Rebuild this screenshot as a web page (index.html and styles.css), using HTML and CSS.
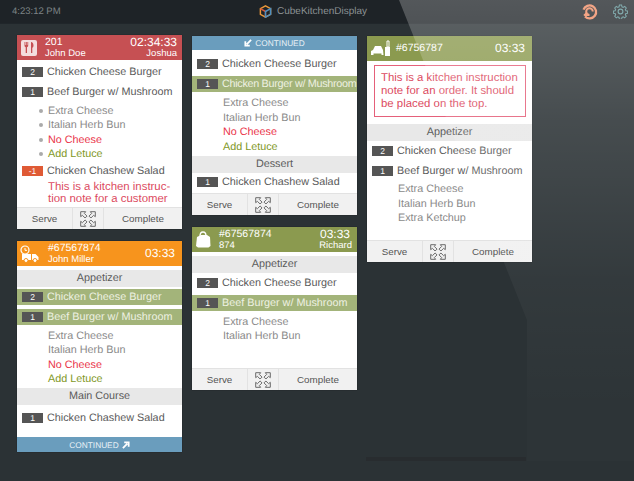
FILE: index.html
```html
<!DOCTYPE html>
<html lang="en">
<head>
  <meta charset="UTF-8" />
  <title>CubeKitchenDisplay</title>
  <link rel="stylesheet" href="styles.css">
</head>
<body>

<svg class="defs" width="0" height="0">
  <symbol id="expand" viewBox="0 0 16 16">
    <g fill="none" stroke="#6a6a6a" stroke-width="1">
      <path d="M.7 .7h5L4.300 2.400 7 5.100 5.100 7 2.400 4.300 .7 5.700z"/>
      <path d="M15.300 .7h-5l1.400 1.700L9 5.100 10.900 7l2.700-2.700 1.700 1.400z"/>
      <path d="M.7 15.300h5l-1.400-1.700L7 10.900 5.100 9l-2.700 2.700-1.700-1.400z"/>
      <path d="M15.300 15.300h-5l1.400-1.700L9 10.900 10.900 9l2.700 2.700 1.700-1.400z"/>
    </g>
  </symbol>
</svg>

<header class="topbar">
  <span class="clock">4:23:12 PM</span>
  <div class="brand">
    <svg width="13" height="13" viewBox="0 0 14 14">
      <path d="M7 1l5.500 3v6L7 13 1.500 10V4z" fill="none" stroke="#e8973a" stroke-width="1.600"/>
      <path d="M1.500 4L7 7v6" fill="none" stroke="#d9593a" stroke-width="1.600"/>
      <path d="M12.500 4L7 7v6l5.500-3z" fill="none" stroke="#4d8fc0" stroke-width="1.600"/>
    </svg>
    CubeKitchenDisplay
  </div>
  <div class="tools">
    <svg width="17" height="17" viewBox="0 0 17 17">
      <path d="M4 13.500a6.500 6.500 0 1 0 -1.500-6.800" fill="none" stroke="#ef8a62" stroke-width="2.300"/>
      <path d="M11.800 8.500a3.300 3.300 0 1 0-3.300 3.400H3.500" fill="none" stroke="#ef8a62" stroke-width="2"/>
      <path d="M5.500 8.800l-3.200 3.100 3.200 2.300z" fill="#ef8a62"/>
    </svg>
    <svg width="15" height="15" viewBox="0 0 24 24">
      <circle cx="12" cy="12" r="3.800" fill="none" stroke="#5d9396" stroke-width="1.800"/>
      <path d="M10 1.500h4l.6 3 2.300 1 2.600-1.700 2.800 2.800-1.700 2.600 1 2.300 3 .6v3.800l-3 .6-1 2.300 1.700 2.600-2.800 2.800-2.600-1.700-2.300 1-.6 3h-4l-.6-3-2.300-1-2.600 1.700-2.800-2.800 1.700-2.600-1-2.300-3-.6v-3.800l3-.6 1-2.300L1.700 6.600l2.800-2.800 2.600 1.700 2.300-1z" transform="translate(1.200 .4) scale(.9)" fill="none" stroke="#5d9396" stroke-width="1.800"/>
    </svg>
  </div>
</header>

<main class="board">
  <div class="col">
    <section class="card card-a">
      <div class="card-head red">
        <span class="plate">
          <svg width="12" height="13" viewBox="0 0 12 13">
            <path d="M1.500 1v3.500c0 1 .7 1.500 1.200 1.700V12h1.300V6.200c.5-.2 1.200-.7 1.200-1.700V1h-.8v3H3.800V1h-.9v3H2.300V1zM8 1c1.500 0 2.500 1.500 2.500 3.500 0 1.300-.5 2-1.200 2.300V12H8z" fill="#c65053"/>
          </svg>
        </span>
        <div class="who"><b>201</b><span>John Doe</span></div>
        <div class="when"><b>02:34:33</b><span>Joshua</span></div>
      </div>
      <div class="card-body">
        <div class="item"><span class="qty">2</span>Chicken Cheese Burger</div>
        <div class="item"><span class="qty">1</span>Beef Burger w/ Mushroom</div>
        <ul class="mods dotted">
          <li>Extra Cheese</li>
          <li>Italian Herb Bun</li>
          <li class="no">No Cheese</li>
          <li class="add">Add Letuce</li>
        </ul>
        <div class="item"><span class="qty minus">-1</span>Chicken Chashew Salad</div>
        <p class="cust-note">This is a kitchen instruc-<br>tion note for a customer</p>
      </div>
      <div class="card-foot">
        <button>Serve</button>
        <button class="zoom"><svg width="16" height="16"><use href="#expand"/></svg></button>
        <button>Complete</button>
      </div>
    </section>

    <section class="card card-b">
      <div class="card-head orange">
        <svg class="kind" width="20" height="18" viewBox="0 0 20 18">
          <circle cx="5" cy="5" r="4" fill="none" stroke="#fff" stroke-width="1.200"/>
          <path d="M5 3v2.300h2" fill="none" stroke="#fff"/>
          <path d="M2 9h9v6H2zM12 9h3.500l3 3v3H12z" fill="#fff"/>
          <circle cx="6" cy="15.500" r="2" fill="#fff" stroke="#f7941d"/>
          <circle cx="15" cy="15.500" r="2" fill="#fff" stroke="#f7941d"/>
        </svg>
        <div class="who"><b>#67567874</b><span>John Miller</span></div>
        <div class="when solo"><b>03:33</b></div>
      </div>
      <div class="card-body">
        <div class="course">Appetizer</div>
        <div class="item on"><span class="qty">2</span>Chicken Cheese Burger</div>
        <div class="item on"><span class="qty">1</span>Beef Burger w/ Mushroom</div>
        <ul class="mods">
          <li>Extra Cheese</li>
          <li>Italian Herb Bun</li>
          <li class="no">No Cheese</li>
          <li class="add">Add Letuce</li>
        </ul>
        <div class="course">Main Course</div>
        <div class="item"><span class="qty">1</span>Chicken Chashew Salad</div>
      </div>
      <div class="cont-foot">CONTINUED <svg width="8" height="8" viewBox="0 0 9 9"><path d="M1 8l5-5M2.500 1.500h5v5" fill="none" stroke="#fff" stroke-width="2"/></svg></div>
    </section>
  </div>

  <div class="col">
    <section class="card card-c">
      <div class="cont-head"><svg width="8" height="8" viewBox="0 0 9 9"><path d="M8 1L3 6M1.500 2.500v5h5" fill="none" stroke="#fff" stroke-width="2"/></svg> CONTINUED</div>
      <div class="card-body">
        <div class="item"><span class="qty">2</span>Chicken Cheese Burger</div>
        <div class="item on tight"><span class="qty">1</span>Chicken Burger w/ Mushroom</div>
        <ul class="mods">
          <li>Extra Cheese</li>
          <li>Italian Herb Bun</li>
          <li class="no">No Cheese</li>
          <li class="add">Add Letuce</li>
        </ul>
        <div class="course">Dessert</div>
        <div class="item"><span class="qty">1</span>Chicken Chashew Salad</div>
      </div>
      <div class="card-foot">
        <button>Serve</button>
        <button class="zoom"><svg width="16" height="16"><use href="#expand"/></svg></button>
        <button>Complete</button>
      </div>
    </section>

    <section class="card card-d">
      <div class="card-head olive">
        <svg class="kind" width="16" height="17" viewBox="0 0 16 17">
          <path d="M5 5c0-3 1-4 3-4s3 1 3 4" fill="none" stroke="#fff" stroke-width="1.300"/>
          <path d="M2 6l4-2h6l3 2 .5 9-2 1.500H3L1 15z" fill="#fff"/>
        </svg>
        <div class="who"><b>#67567874</b><span>874</span></div>
        <div class="when"><b>03:33</b><span>Richard</span></div>
      </div>
      <div class="card-body">
        <div class="course">Appetizer</div>
        <div class="item"><span class="qty">2</span>Chicken Cheese Burger</div>
        <div class="item on"><span class="qty">1</span>Beef Burger w/ Mushroom</div>
        <ul class="mods">
          <li>Extra Cheese</li>
          <li>Italian Herb Bun</li>
        </ul>
      </div>
      <div class="card-foot">
        <button>Serve</button>
        <button class="zoom"><svg width="16" height="16"><use href="#expand"/></svg></button>
        <button>Complete</button>
      </div>
    </section>
  </div>

  <div class="col">
    <section class="card card-e">
      <div class="card-head olive">
        <svg class="kind car" width="21" height="17" viewBox="0 0 21 17">
          <path d="M1 15v-4l2-1 2-4h6l2 4 .5 5h-2v-1.500H3.500V15z" fill="#fff"/>
          <path d="M15 7h5v9h-5z" fill="#fff"/>
          <path d="M17 1h2v6h-2z" fill="none" stroke="#fff"/>
        </svg>
        <div class="who one"><b>#6756787</b></div>
        <div class="when solo"><b>03:33</b></div>
      </div>
      <div class="card-body">
        <p class="order-note">This is a kitchen instruction note for an order. It should be placed on the top.</p>
        <div class="course">Appetizer</div>
        <div class="item"><span class="qty">2</span>Chicken Cheese Burger</div>
        <div class="item"><span class="qty">1</span>Beef Burger w/ Mushroom</div>
        <ul class="mods">
          <li>Extra Cheese</li>
          <li>Italian Herb Bun</li>
          <li>Extra Ketchup</li>
        </ul>
      </div>
      <div class="card-foot">
        <button>Serve</button>
        <button class="zoom"><svg width="16" height="16"><use href="#expand"/></svg></button>
        <button>Complete</button>
      </div>
    </section>
  </div>
</main>

<div class="pager"></div>
<div class="glare"></div>

</body>
</html>
```

FILE: styles.css
```css
body {
  font-family: "Liberation Sans", Arial, sans-serif;
  text-rendering: geometricPrecision;
  margin: 0;
  width: 634px;
  height: 481px;
  overflow: hidden;
  background: #2b3235;
  position: relative;
}
.defs { position: absolute; }

.topbar {
  height: 23px;
  background: #1e2327;
  border-bottom: 1px solid #20262a;
  display: flex;
  align-items: center;
  justify-content: space-between;
  padding: 0 6px 0 12px;
  position: relative;
}
.clock { font-size: 9.500px; color: #7d8386; }
.brand {
  position: absolute;
  left: 259px;
  top: 5px;
  font-size: 10px;
  color: #8b9194;
  display: flex;
  align-items: center;
  gap: 5px;
}
.tools { display: flex; align-items: center; gap: 15px; }

.board {
  display: flex;
  gap: 10px;
  padding: 11px 0 0 17px;
}
.col { width: 165px; display: flex; flex-direction: column; gap: 12px; }

.card {
  background: white;
  display: flex;
  flex-direction: column;
  color: #5a5a5a;
  box-shadow: 0 0 1px rgba(0,0,0,0.5);
}
.card-a { height: 194px; }
.card-b { height: 211px; }
.card-c { height: 179px; margin-top: 1px; }
.card-d { height: 163px; }
.card-e { height: 226px; margin-top: 1px; }

.card-head {
  height: 25px;
  flex: none;
  display: flex;
  align-items: center;
  color: white;
  padding: 0 5px 0 3px;
}
.red { background: #c65053; }
.orange { background: #f7941d; }
.olive { background: #8b9a4f; }
.plate {
  width: 16px;
  height: 16px;
  margin-left: 1px;
  background: #f4dede;
  border-radius: 2px;
  display: flex;
  align-items: center;
  justify-content: center;
}
.kind { flex: none; }
.car { margin-right: -2px; }
.who { margin-left: 8px; flex: 1; display: flex; flex-direction: column; }
.who.one { margin-left: 7px; }
.who b { font-weight: normal; font-size: 10.500px; line-height: 13px; }
.who span { font-size: 9.500px; line-height: 10px; }
.when { text-align: right; display: flex; flex-direction: column; }
.when b { font-weight: normal; font-size: 12px; line-height: 13px; }
.when span { font-size: 9.500px; line-height: 10px; }
.when.solo b { margin-right: 2px; }
.card-d .when b { margin-right: 2px; }

.card-body { flex: 1; overflow: hidden; padding-top: 4px; }
.item {
  height: 16px;
  margin-bottom: 4px;
  display: flex;
  align-items: center;
  font-size: 10.800px;
  white-space: nowrap;
  padding-left: 5px;
}
.item.on {
  background: #a3b47a;
  color: #eef1e2;
  margin-top: 1px;
}
.item.tight { letter-spacing: -0.3px; }
.qty {
  width: 21px;
  height: 10px;
  background: #555;
  color: white;
  font-size: 8.500px;
  line-height: 10px;
  text-align: center;
  margin-right: 4px;
  flex: none;
  letter-spacing: 0;
}
.qty.minus { background: #df5a35; }
.course {
  height: 17px;
  line-height: 17px;
  background: #e8e8e8;
  text-align: center;
  font-size: 10.800px;
  margin-bottom: 2px;
}
.mods + .course { margin: 1.500px 0 5px; }
.mods {
  list-style: none;
  margin: -0.500px 0 0;
  padding: 0 0 0 31px;
  font-size: 10.800px;
  color: #8a8a8a;
}
.mods + .item { margin-top: 1px; }
.mods li { height: 14.500px; line-height: 14.500px; position: relative; }
.mods .no { color: #ea3348; }
.mods .add { color: #7f981f; }
.dotted li::before {
  content: "";
  position: absolute;
  left: -9px;
  top: 5px;
  width: 4px;
  height: 4px;
  border-radius: 50%;
  background: #aaa;
}
.cust-note {
  margin: -1.500px 0 0;
  padding-left: 31px;
  font-size: 11.400px;
  line-height: 12px;
  color: #dc4a60;
}
.order-note {
  margin: 0 6px 6.500px 7px;
  border: 1px solid #e5607a;
  padding: 6px 4px 3px 6px;
  font-size: 11.400px;
  line-height: 13px;
  color: #dc4a60;
  height: 52px;
  box-sizing: border-box;
}

/* continued card has a thinner head and more air above the first row */
.card-c .card-body { padding-top: 6px; }
.card-c .item.on { margin-top: 2px; }
.card-c .mods { margin-top: 1.500px; }
.card-c .mods + .course { margin-bottom: 1px; }

.card-foot {
  height: 21px;
  flex: none;
  display: flex;
  background: #f1f1f1;
  border-top: 1px solid #e2e2e2;
}
.card-foot button {
  flex: 1;
  padding: 0;
  border: none;
  background: none;
  font: 9.800px "Liberation Sans", Arial, sans-serif;
  color: #555;
}
.card-foot button:first-child { flex: none; width: 55px; }
.card-foot .zoom {
  flex: none;
  width: 32px;
  border-left: 1px solid #e2e2e2;
  border-right: 1px solid #e2e2e2;
  display: flex;
  align-items: center;
  justify-content: center;
}

.cont-head, .cont-foot {
  height: 15px;
  flex: none;
  background: #6a9dbd;
  color: #e8f1f6;
  font-size: 8.300px;
  display: flex;
  align-items: center;
  justify-content: center;
  gap: 3px;
}
.cont-head { height: 14px; }

.pager {
  position: absolute;
  left: 366px;
  top: 457px;
  width: 160px;
  height: 4px;
  background: #282c2f;
}
.glare {
  position: absolute;
  inset: 0;
  pointer-events: none;
  background: linear-gradient(to bottom, rgba(255,255,255,0.24), rgba(255,255,255,0.13) 120px, rgba(255,255,255,0.04) 280px, rgba(255,255,255,0.01) 400px);
  clip-path: polygon(399px 0, 634px 0, 634px 461px, 527px 461px, 527px 320px);
}
```
